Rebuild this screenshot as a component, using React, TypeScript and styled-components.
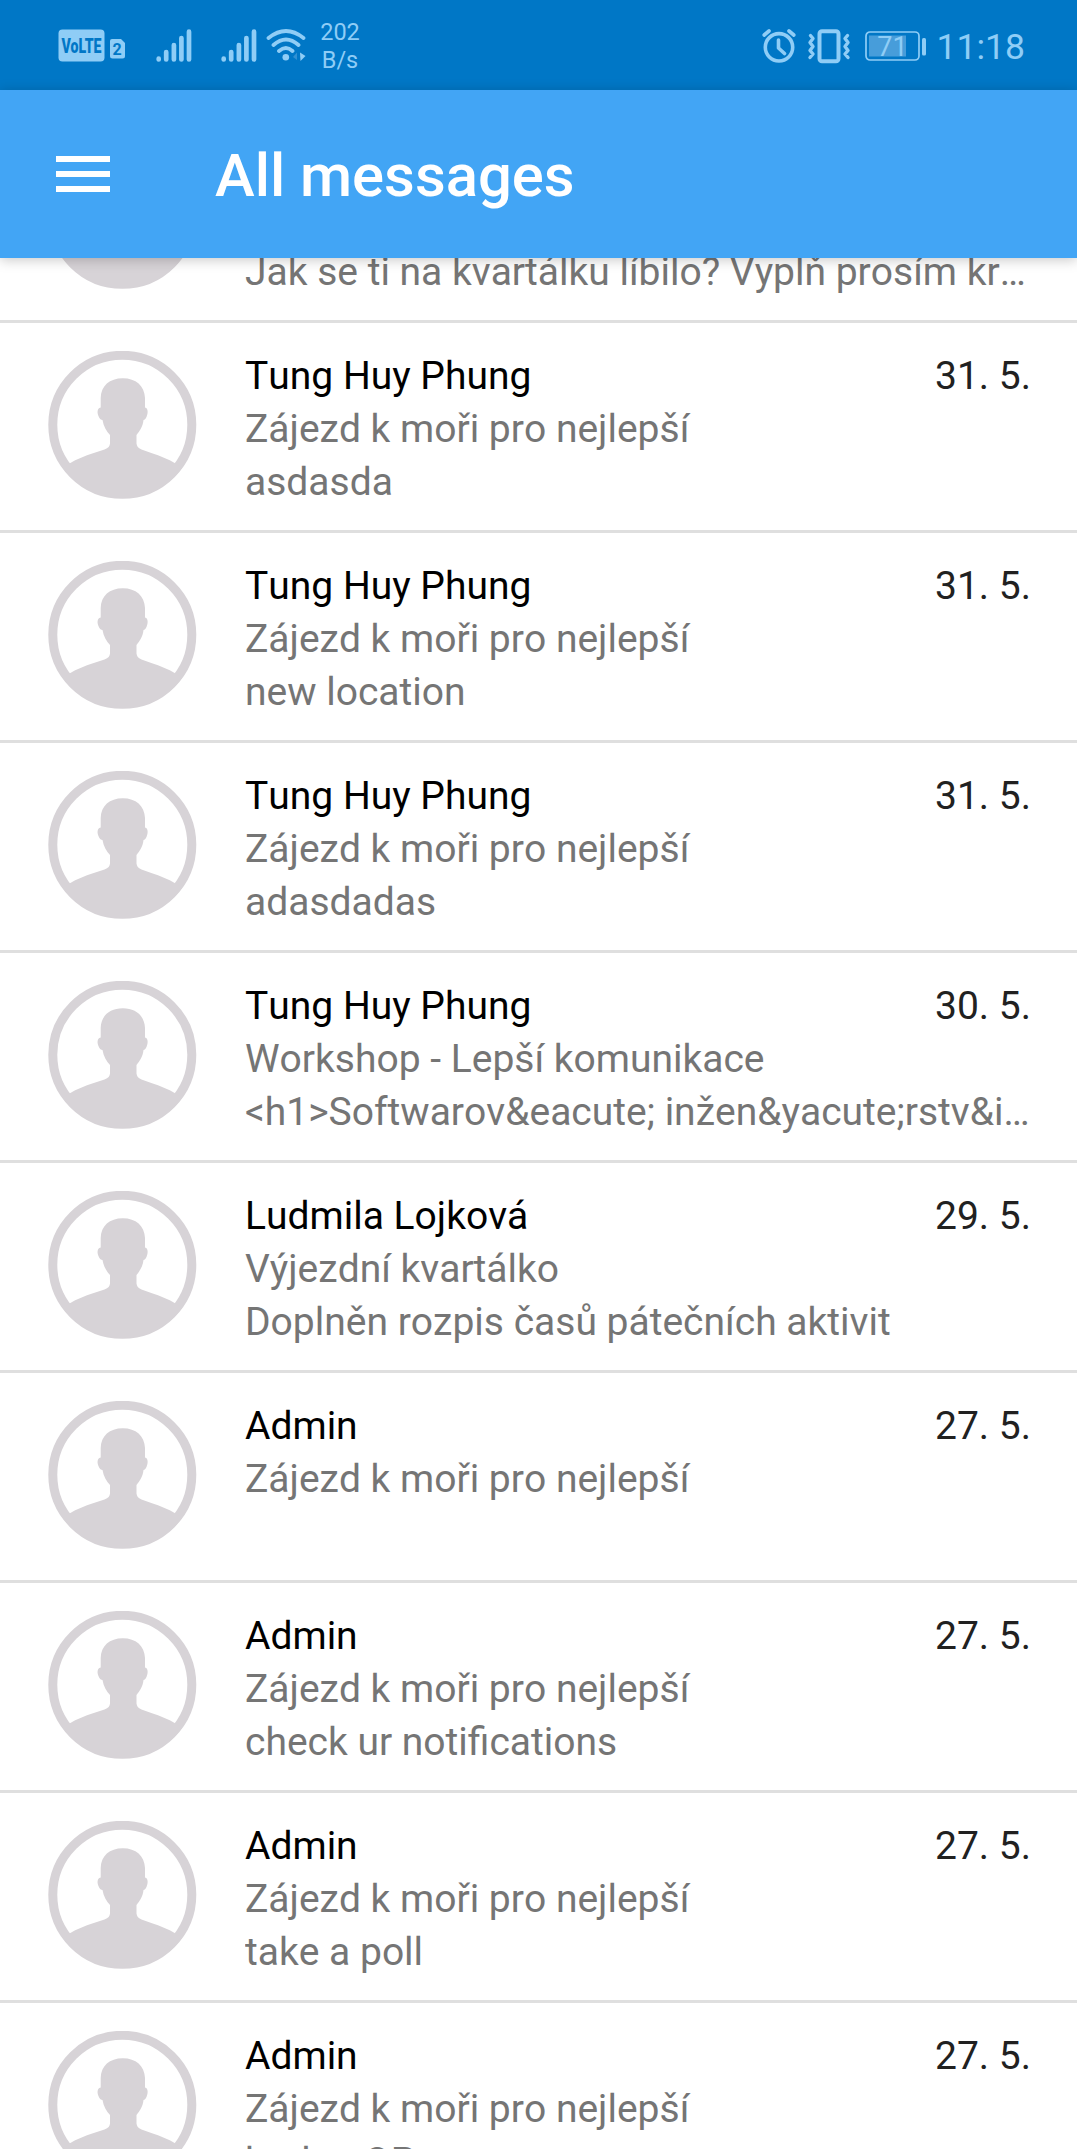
import React from 'react';
import styled, { createGlobalStyle } from 'styled-components';

const Global = createGlobalStyle`
  * { box-sizing: border-box; }
  html, body { margin: 0; padding: 0; background: #fff; }
  body { font-family: Roboto, "Liberation Sans", sans-serif; }
`;

const TINT = '#8fcdf6';

const Screen = styled.div`
  width: 1077px;
  height: 2149px;
  overflow: hidden;
  display: flex;
  flex-direction: column;
  background: #fff;
`;

const StatusBar = styled.header`
  flex: none;
  height: 90px;
  padding: 2px 52px 0 58px;
  background: #0077c6;
  color: ${TINT};
  display: flex;
  align-items: center;
  justify-content: space-between;
`;

const StatusGroup = styled.div`
  display: flex;
  align-items: center;
`;

const Glyph = styled.svg<{ $left?: number }>`
  display: block;
  flex: none;
  margin-left: ${(p) => p.$left ?? 0}px;
`;

const Speed = styled.div`
  margin-left: 12px;
  width: 42px;
  text-align: center;
  font-size: 23.5px;
  line-height: 28px;
`;

const Clock = styled.span`
  margin: 2px 0 0 10px;
  font-size: 35.5px;
  line-height: 44px;
`;

const AppBar = styled.div`
  flex: none;
  height: 168px;
  padding-left: 56px;
  background: #42a5f5;
  color: #fff;
  display: flex;
  align-items: center;
  z-index: 1;
  box-shadow: 0 2px 12px rgba(0, 0, 0, 0.22);
`;

const MenuButton = styled.button`
  border: 0;
  padding: 0;
  width: 54px;
  background: none;
  display: grid;
  gap: 9px;
`;

const MenuLine = styled.span`
  height: 6px;
  background: #fff;
`;

const Title = styled.h1`
  margin: 4px 0 0 105px;
  font-size: 59.8px;
  line-height: 70px;
  font-weight: 500;
`;

const List = styled.main`
  flex: 1;
  min-height: 0;
  overflow: hidden;
  display: flex;
  flex-direction: column;
  justify-content: flex-start;
`;

const Row = styled.article<{ $scrolled?: boolean }>`
  flex: none;
  height: 210px;
  margin-top: ${(p) => (p.$scrolled ? -145 : 0)}px;
  padding: 28px 46px 0 48px;
  border-bottom: 3px solid #dfdfdf;
  display: flex;
  align-items: flex-start;
`;

const Body = styled.div`
  flex: 1;
  min-width: 0;
  margin: -1px 0 0 48px;
  font-size: 39px;
  line-height: 53px;
  font-kerning: none;
`;

const Heading = styled.div`
  display: flex;
  justify-content: space-between;
`;

const Sender = styled.span`
  color: #000;
`;

const DateText = styled.time`
  color: #212121;
`;

const Line = styled.div`
  color: #757575;
  white-space: nowrap;
  overflow: hidden;
  text-overflow: ellipsis;
`;

const Avatar = () => (
  <Glyph width="149" height="149" viewBox="0 0 149 149">
    <circle cx="74.300" cy="73.800" r="69.500" fill="#fff" stroke="#d7d3d7" strokeWidth="9" />
    <path
      fill="#d7d3d7"
      d="M74.800 27.300 C88 27.300 96.500 35 97 47 L97 56.500 C99.500 57 100 60 99.400 63 C98.500 67 97.500 68.500 95.500 69 C95 75 91.500 80.500 88.500 84 L88.500 92.500 C88.800 95 90 97 93.500 98.500 L104 102.300 C112 105 120 108 127.500 112.500 L134 117 A74 74 0 0 1 15 117 L21.500 112.500 C29 108 37 105 45 102.300 L56.500 98.500 C60.500 97 61.800 95 62 92.500 L62 84 C58.500 80.500 55.500 75 54.500 69 C52 68.500 51 67 49.800 63 C49 60 50 57 52.700 56.500 L52.700 47 C53 35 61.500 27.300 74.800 27.300 Z"
    />
  </Glyph>
);

const SignalBars = ({ left }: { left: number }) => (
  <Glyph $left={left} width="36" height="34" viewBox="0 0 36 34" stroke={TINT} strokeWidth="4.700" strokeLinecap="round">
    <path d="M2.700 29.700V30.500M10.200 23V30.500M17.900 16V30.500M25.400 9V30.500M33 2.700V30.500" />
  </Glyph>
);

const VolteIcon = () => (
  <Glyph width="68" height="34" viewBox="0 0 68 34">
    <rect x="0.500" y="0.500" width="46" height="32" rx="4" fill={TINT} />
    <text x="23.500" y="23.500" textAnchor="middle" textLength="40" lengthAdjust="spacingAndGlyphs" fontSize="20" fontWeight="900" fill="#0077c6">VoLTE</text>
    <path d="M54 10H63L67 14V27Q67 29.500 64.500 29.500H54.500Q52 29.500 52 27V12Q52 10 54 10Z" fill={TINT} />
    <text x="59" y="25.800" textAnchor="middle" fontSize="16" fontWeight="700" fill="#0077c6">2</text>
  </Glyph>
);

const WifiIcon = () => (
  <Glyph $left={9} width="41" height="34" viewBox="0 0 41 34" fill="none" stroke={TINT} strokeWidth="3.800" strokeLinecap="round">
    <path d="M2.500 9Q20 -5 37.500 9M7.500 16Q20 5 32.500 16M13 22Q20 16 26.500 22" />
    <circle cx="19.800" cy="28.300" r="3.300" fill={TINT} stroke="none" />
    <path d="M27 28L31 23.500V31Z" fill="#3090d2" stroke="none" />
    <path d="M34 23.500L39.500 27L34.500 32Z" fill={TINT} stroke="none" />
  </Glyph>
);

const AlarmIcon = () => (
  <Glyph width="34" height="35" viewBox="0 0 34 35" fill="none" stroke={TINT} strokeWidth="3.600" strokeLinecap="round" strokeLinejoin="round">
    <circle cx="17" cy="18.300" r="13.700" />
    <path d="M16.500 11V19L22.500 24.500M2.200 6L7 2M27 2L31.800 6" />
  </Glyph>
);

const VibrateIcon = () => (
  <Glyph $left={11} width="44" height="35" viewBox="0 0 44 35" fill="none" stroke={TINT} strokeWidth="3.400" strokeLinecap="round" strokeLinejoin="round">
    <rect x="12.500" y="2.200" width="19" height="30" rx="2.500" strokeWidth="4" />
    <path d="M3.500 6.500L6 9.500L3 13.500L6 17.500L3 21.500L6 25L3 28.500M40.500 6.500L38 9.500L41 13.500L38 17.500L41 21.500L38 25L41 28.500" />
  </Glyph>
);

const BatteryIcon = () => (
  <Glyph $left={14} width="62" height="32" viewBox="0 0 62 32">
    <rect x="1" y="2" width="53" height="28" rx="4" fill="none" stroke={TINT} strokeWidth="1.700" />
    <rect x="4" y="5.500" width="37" height="21" fill="#479dda" />
    <rect x="57" y="8" width="4" height="17.500" rx="1.500" fill={TINT} />
    <text x="27.500" y="25.500" textAnchor="middle" fontSize="27" fill={TINT}>71</text>
  </Glyph>
);

type Message = { sender: string; date: string; subject: string; preview?: string };

const ZAJEZD = 'Zájezd k moři pro nejlepší';

const messages: Message[] = [
  { sender: '', date: '', subject: '', preview: 'Jak se ti na kvartálku líbilo? Vyplň prosím krátký dotazník' },
  { sender: 'Tung Huy Phung', date: '31. 5.', subject: ZAJEZD, preview: 'asdasda' },
  { sender: 'Tung Huy Phung', date: '31. 5.', subject: ZAJEZD, preview: 'new location' },
  { sender: 'Tung Huy Phung', date: '31. 5.', subject: ZAJEZD, preview: 'adasdadas' },
  { sender: 'Tung Huy Phung', date: '30. 5.', subject: 'Workshop - Lepší komunikace', preview: '<h1>Softwarov&eacute; inžen&yacute;rstv&iacute;</h1>' },
  { sender: 'Ludmila Lojková', date: '29. 5.', subject: 'Výjezdní kvartálko', preview: 'Doplněn rozpis časů pátečních aktivit' },
  { sender: 'Admin', date: '27. 5.', subject: ZAJEZD },
  { sender: 'Admin', date: '27. 5.', subject: ZAJEZD, preview: 'check ur notifications' },
  { sender: 'Admin', date: '27. 5.', subject: ZAJEZD, preview: 'take a poll' },
  { sender: 'Admin', date: '27. 5.', subject: ZAJEZD, preview: 'budou OP' },
];

export default function App() {
  return (
    <Screen>
      <Global />
      <StatusBar>
        <StatusGroup>
          <VolteIcon />
          <SignalBars left={30} />
          <SignalBars left={29} />
          <WifiIcon />
          <Speed>202<br />B/s</Speed>
        </StatusGroup>
        <StatusGroup>
          <AlarmIcon />
          <VibrateIcon />
          <BatteryIcon />
          <Clock>11:18</Clock>
        </StatusGroup>
      </StatusBar>
      <AppBar>
        <MenuButton aria-label="Menu">
          <MenuLine /><MenuLine /><MenuLine />
        </MenuButton>
        <Title>All messages</Title>
      </AppBar>
      <List>
        {messages.map((m, i) => (
          <Row key={i} $scrolled={i === 0}>
            <Avatar />
            <Body>
              <Heading>
                <Sender>{m.sender || '\u00a0'}</Sender>
                <DateText>{m.date}</DateText>
              </Heading>
              <Line>{m.subject || '\u00a0'}</Line>
              {m.preview && <Line>{m.preview}</Line>}
            </Body>
          </Row>
        ))}
      </List>
    </Screen>
  );
}
